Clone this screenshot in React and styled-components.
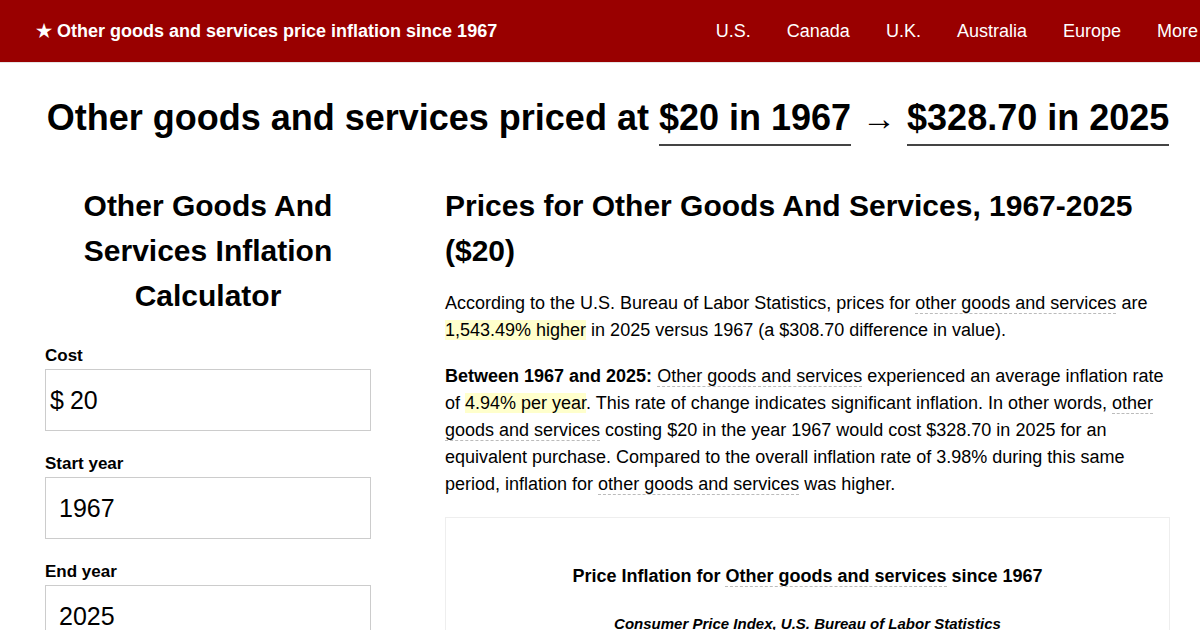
import React from 'react'
import styled, { createGlobalStyle } from 'styled-components'

const GlobalStyle = createGlobalStyle`
    body {
        margin: 0;
        font-family: "Liberation Sans", Arial, sans-serif;
        color: #000;
        background: #fff;
        overflow: hidden;
    }
`

const TopBar = styled.header`
    display: flex;
    align-items: center;
    justify-content: space-between;
    height: 62px;
    background: #990000;
    border-bottom: 1px solid #e5e5e5;
    padding: 0 0 0 36px;
    color: #fff;
    white-space: nowrap;
    overflow: hidden;
`

const Brand = styled.a`
    font-weight: 700;
    font-size: 18px;
    color: #fff;
    text-decoration: none;
`

const Nav = styled.nav`
    display: flex;
    gap: 36px;
    margin-right: 2px;
`

const NavLink = styled.a`
    font-size: 18px;
    color: #fff;
    text-decoration: none;
`

const Headline = styled.h1`
    margin: 34px 0 0;
    padding-left: 16px;
    text-align: center;
    font-size: 36px;
    font-weight: 700;
    white-space: nowrap;
`

const Amount = styled.span`
    display: inline-block;
    padding-bottom: 5px;
    border-bottom: 2px solid #444;
`

const Arrow = styled.span`
    font-size: 34px;
    margin: 0 11px;
`

const Body = styled.main`
    display: grid;
    grid-template-columns: 326px 1fr;
    gap: 74px;
    padding: 0 30px 0 45px;
    margin-top: 37px;
`

const Side = styled.section``

const SideTitle = styled.h2`
    margin: 0 0 28px;
    text-align: center;
    font-size: 30px;
    line-height: 45px;
    font-weight: 700;
`

const Field = styled.label`
    display: block;
    margin-bottom: 23px;
`

const FieldLabel = styled.div`
    font-weight: 700;
    font-size: 17px;
    margin-bottom: 3px;
`

const InputBox = styled.div`
    display: flex;
    align-items: center;
    height: 62px;
    box-sizing: border-box;
    border: 1px solid #ccc;
    padding-left: ${p => (p.$prefix ? '4px' : '13px')};
    font-size: 25px;
`

const Prefix = styled.span`
    margin-right: 6px;
`

const Content = styled.section``

const Title = styled.h2`
    margin: 0 0 17px;
    font-size: 30px;
    line-height: 45px;
    font-weight: 700;
`

const Para = styled.p`
    margin: 0 0 19px;
    font-size: 18px;
    line-height: 27px;
`

const Term = styled.span`
    border-bottom: 1px dashed #bbb;
`

const Mark = styled.span`
    background: #ffffcc;
`

const ChartCard = styled.div`
    border: 1px solid #eee;
    border-bottom: none;
    height: 200px;
    padding-top: 48px;
    text-align: center;
`

const ChartTitle = styled.div`
    font-weight: 700;
    font-size: 18px;
`

const ChartSource = styled.div`
    margin-top: 28px;
    font-weight: 700;
    font-style: italic;
    font-size: 15px;
`

export default function App() {
    return (
        <>
            <GlobalStyle />
            <TopBar>
                <Brand href="#">★ Other goods and services price inflation since 1967</Brand>
                <Nav>
                    {['U.S.', 'Canada', 'U.K.', 'Australia', 'Europe', 'More'].map(n => (
                        <NavLink key={n} href="#">{n}</NavLink>
                    ))}
                </Nav>
            </TopBar>

            <Headline>
                Other goods and services priced at <Amount>$20 in 1967</Amount>
                <Arrow>→</Arrow>
                <Amount>$328.70 in 2025</Amount>
            </Headline>

            <Body>
                <Side>
                    <SideTitle>Other Goods And Services Inflation Calculator</SideTitle>
                    <Field>
                        <FieldLabel>Cost</FieldLabel>
                        <InputBox $prefix>
                            <Prefix>$</Prefix>20
                        </InputBox>
                    </Field>
                    <Field>
                        <FieldLabel>Start year</FieldLabel>
                        <InputBox>1967</InputBox>
                    </Field>
                    <Field>
                        <FieldLabel>End year</FieldLabel>
                        <InputBox>2025</InputBox>
                    </Field>
                </Side>

                <Content>
                    <Title>Prices for Other Goods And Services, 1967-2025 ($20)</Title>
                    <Para>
                        According to the U.S. Bureau of Labor Statistics, prices for{' '}
                        <Term>other goods and services</Term> are <Mark>1,543.49% higher</Mark> in
                        2025 versus 1967 (a $308.70 difference in value).
                    </Para>
                    <Para>
                        <b>Between 1967 and 2025:</b> <Term>Other goods and services</Term>{' '}
                        experienced an average inflation rate of <Mark>4.94% per year</Mark>. This
                        rate of change indicates significant inflation. In other words,{' '}
                        <Term>other goods and services</Term> costing $20 in the year 1967 would
                        cost $328.70 in 2025 for an equivalent purchase. Compared to the overall
                        inflation rate of 3.98% during this same period, inflation for{' '}
                        <Term>other goods and services</Term> was higher.
                    </Para>
                    <ChartCard>
                        <ChartTitle>
                            Price Inflation for <Term>Other goods and services</Term> since 1967
                        </ChartTitle>
                        <ChartSource>Consumer Price Index, U.S. Bureau of Labor Statistics</ChartSource>
                    </ChartCard>
                </Content>
            </Body>
        </>
    )
}
